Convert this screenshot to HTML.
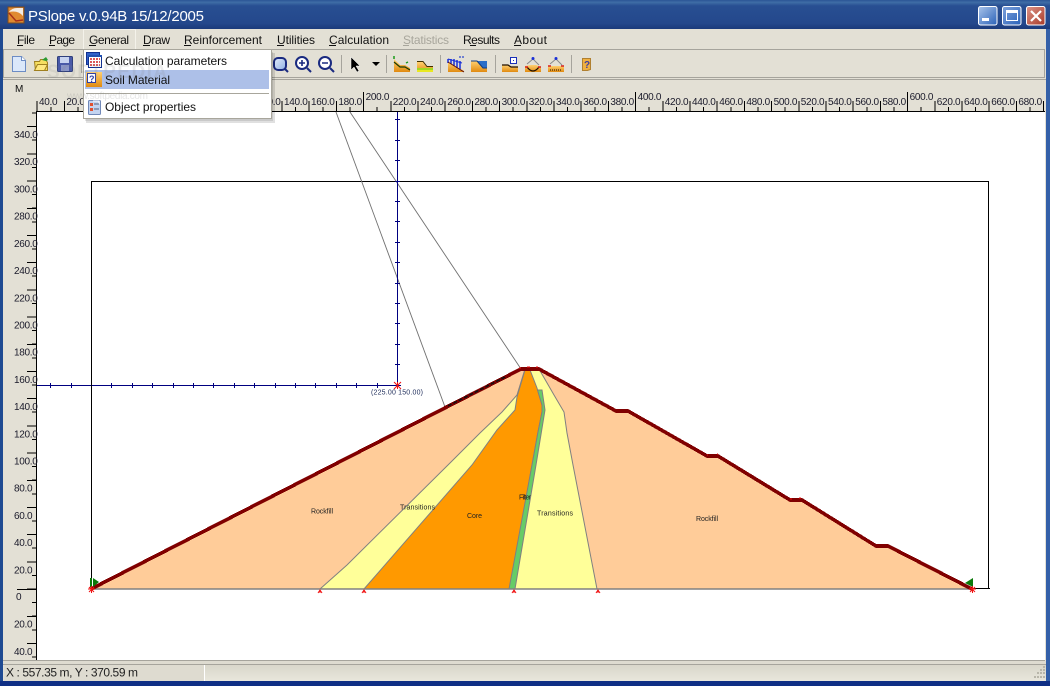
<!DOCTYPE html>
<html>
<head>
<meta charset="utf-8">
<style>
html,body{margin:0;padding:0;width:1050px;height:686px;overflow:hidden;background:#e3e0d5}
svg{display:block;font-family:"Liberation Sans",sans-serif}
.m{font-size:12px;fill:#111}
.r{font-size:10px;fill:#1a1a2a;letter-spacing:-.3px}
.d{font-size:7px;fill:#222}
</style>
</head>
<body>
<svg width="1050" height="686" viewBox="0 0 1050 686" xmlns="http://www.w3.org/2000/svg">
<defs>
<linearGradient id="tb" x1="0" y1="0" x2="0" y2="1">
<stop offset="0" stop-color="#2a5596"/><stop offset=".08" stop-color="#3f6da6"/><stop offset=".2" stop-color="#284f92"/><stop offset=".8" stop-color="#24488c"/><stop offset="1" stop-color="#1b3a7a"/>
</linearGradient>
<linearGradient id="bb" x1="0" y1="0" x2="1" y2="1"><stop offset="0" stop-color="#a9c4ea"/><stop offset="1" stop-color="#2a62b8"/></linearGradient>
<linearGradient id="mb" x1="0" y1="0" x2="1" y2="1"><stop offset="0" stop-color="#7ea2dc"/><stop offset="1" stop-color="#2a62b8"/></linearGradient>
<linearGradient id="cb" x1="0" y1="0" x2="1" y2="1"><stop offset="0" stop-color="#dc9488"/><stop offset="1" stop-color="#a83a28"/></linearGradient>
<linearGradient id="og" x1="0" y1="0" x2="0" y2="1"><stop offset="0" stop-color="#ffd070"/><stop offset="1" stop-color="#e08a10"/></linearGradient>
<linearGradient id="st" x1="0" y1="0" x2="0" y2="1"><stop offset="0" stop-color="#d9d6ca"/><stop offset="1" stop-color="#e8e6dc"/></linearGradient>
<linearGradient id="lens" x1="0" y1="0" x2="1" y2="1"><stop offset="0" stop-color="#e4ecfa"/><stop offset="1" stop-color="#8fb0e4"/></linearGradient>
</defs>

<!-- frame -->
<rect width="1050" height="686" fill="#e3e0d5"/>
<rect x="0" y="0" width="3" height="686" fill="#1f4a92"/>
<rect x="1046" y="0" width="4" height="686" fill="#3460a8"/>
<rect x="0" y="0" width="1050" height="29" fill="url(#tb)"/>
<rect x="0" y="681" width="1050" height="5" fill="#0f2f85"/>

<!-- title -->
<g>
<rect x="8" y="7" width="16" height="16" fill="#e08a30"/>
<path d="M9 12 Q12 8 17 8 L23 8 L23 16 Q18 10 9 12Z" fill="#f4ece4"/>
<path d="M9 13 L16 21 L23 20" fill="none" stroke="#a83018" stroke-width="1.5"/>
<path d="M8 7h16v16h-16z" fill="none" stroke="#7a4a20"/>
</g>
<text x="28" y="21" font-size="15px" fill="#fff" textLength="176" lengthAdjust="spacing">PSlope v.0.94B 15/12/2005</text>
<g>
<rect x="978.500" y="6.500" width="18.500" height="18.500" rx="2" fill="url(#bb)" stroke="#fff"/>
<rect x="982" y="18" width="7" height="3" fill="#fff"/>
<rect x="1002.500" y="6.500" width="18.500" height="18.500" rx="2" fill="url(#mb)" stroke="#fff"/>
<path d="M1006.500 10.500h11v10h-11z" fill="none" stroke="#fff"/>
<rect x="1006" y="10" width="12" height="3" fill="#fff"/>
<rect x="1026.500" y="6.500" width="18.500" height="18.500" rx="2" fill="url(#cb)" stroke="#fff"/>
<path d="M1031 11 L1041 21 M1041 11 L1031 21" stroke="#fff" stroke-width="2.2"/>
</g>

<!-- menubar -->
<g class="m">
<text class="m" x="17" y="44" textLength="18">File</text>
<text class="m" x="49" y="44" textLength="26">Page</text>
<text class="m" x="89" y="44" textLength="40">General</text>
<text class="m" x="143" y="44" textLength="27">Draw</text>
<text class="m" x="184" y="44" textLength="78">Reinforcement</text>
<text class="m" x="277" y="44" textLength="38">Utilities</text>
<text class="m" x="329" y="44" textLength="60">Calculation</text>
<text class="m" x="403" y="44" textLength="46" style="fill:#a8a69c">Statistics</text>
<text class="m" x="463" y="44" textLength="37">Results</text>
<text class="m" x="514" y="44" textLength="33">About</text>
</g>
<path d="M17 45.500h6M49 45.500h6M89 45.500h7M143 45.500h7M184 45.500h7M277 45.500h7M329 45.500h7M470 45.500h6M514 45.500h7" stroke="#111" fill="none"/>
<path d="M403 45.500h6" stroke="#a8a69c"/>

<!-- toolbar -->
<rect x="3.500" y="49.500" width="1041" height="28" fill="none" stroke="#a6a49c"/>
<rect x="3" y="79" width="1043" height="1" fill="#a6a49c"/>
<g fill="none" stroke="#a6a49c"><path d="M81.500 55v18M341.500 55v18M386.500 55v18M440.500 55v18M495.500 55v18M571.500 55v18"/></g>

<!-- tool icons -->
<path d="M12.500 56.500h9l4 4v11h-13z" fill="#dbe8fa" stroke="#6c8cc4"/>
<path d="M21.500 56.500v4h4" fill="#fff" stroke="#6c8cc4"/>
<path d="M34.500 61.500h5l1-2h5l2 3v8h-12z" fill="#f6de60" stroke="#a08020"/>
<path d="M34.500 70.500l3-6h10l-3 6z" fill="#ffe880" stroke="#a08020"/>
<path d="M42 60l4-3 2 3-2 1" fill="#2a9a30"/>
<rect x="57.500" y="56.500" width="15" height="15" rx="1" fill="#4a5aa8" stroke="#30407c"/>
<rect x="60" y="57" width="9" height="6" fill="#c8d4f0"/>
<rect x="61" y="65" width="8" height="6" fill="#8a96c8"/>

<g fill="none" stroke="#1a2a80" stroke-width="2">
<rect x="274" y="58" width="12" height="12" rx="4" fill="url(#lens)"/><path d="M285 69l3 3"/>
<circle cx="302" cy="63" r="6" fill="#fff"/><path d="M307 68l4 4"/>
<circle cx="325" cy="63" r="6" fill="#fff"/><path d="M330 68l4 4"/>
<path d="M299 63h6M302 60v6M322 63h6" stroke-width="1.6"/>
</g>
<path d="M351 57v13l3-3 3 5 2-1-3-5h4z" fill="#000" stroke="#fff" stroke-width=".5"/>
<path d="M372 62h8l-4 4z" fill="#000"/>

<!-- section icons -->
<g>
<path d="M394 59l6 6h5l5 3v4h-16z" fill="url(#og)"/><path d="M394 62l6 5h5l5 3" fill="none" stroke="#1a3a00" stroke-width="1.2"/>
<path d="M394 56v3M408 62l-2 1" stroke="#1a9a1a" stroke-width="1.500"/>
<path d="M417 62h6l4 5h6v5h-16z" fill="url(#og)"/><path d="M417 68h16v2h-16z" fill="#a0d820"/><path d="M417 70h16v2h-16z" fill="#e8e820"/><path d="M417 61.500h6l4 5h6" fill="none" stroke="#403000"/>
<path d="M448 62l16 9v1h-16z" fill="url(#og)"/><path d="M448 59v4M451 59v5M454 59v7M457 60v8M460 61v8" stroke="#1a30d8" stroke-width="1.500"/><path d="M448 59l14 4" stroke="#1a30d8"/><path d="M448 62l16 10" stroke="#601010"/>
<path d="M459 57h2M462 57h2" stroke="#7080d0" stroke-width="2"/>
<path d="M471 61h6l6 7h4v4h-16z" fill="url(#og)"/><path d="M477 61h10v7h-4z" fill="#2a6ec8"/><path d="M471 61h6l6 7h4" fill="none" stroke="#103a80"/>
<path d="M502 65h6l3 2h7v5h-16z" fill="url(#og)"/><path d="M502 65h6l3 2h7" fill="none" stroke="#201000" stroke-width="1.2"/>
<rect x="510.500" y="57.500" width="6" height="6" fill="#fff" stroke="#1a30b8"/><rect x="513" y="60" width="1" height="1" fill="#1a30b8"/>
<path d="M525 66l6-1 5 0 5 2v5h-16z" fill="url(#og)"/>
<path d="M527 67q6 8 12 0" fill="none" stroke="#201000" stroke-width="1.3"/><path d="M527 64l6-5 6 6" fill="none" stroke="#888"/>
<circle cx="533" cy="58.500" r="1.500" fill="#1a30d8"/><path d="M525 67h3M538 67h3" stroke="#d82020" stroke-width="1.500"/>
<path d="M548 66h16v6h-16z" fill="url(#og)"/>
<path d="M550 70h12" stroke="#201000" stroke-dasharray="1 1"/><path d="M550 64l6-5 6 6" fill="none" stroke="#888"/>
<circle cx="556" cy="58.500" r="1.500" fill="#1a30d8"/><path d="M548 66h3M561 66h3" stroke="#d82020" stroke-width="1.500"/>
<path d="M582.500 58.500h8v11l-3 1h-5z" fill="#f0b040" stroke="#b08030"/>
<text x="584" y="68" font-size="10px" font-weight="bold" fill="#4040a0">?</text>
</g>

<!-- ruler labels -->
<text x="15" y="92" font-size="10px" fill="#111">M</text>
<rect x="37" y="112" width="1008" height="549" fill="#fff"/>
<g shape-rendering="crispEdges" fill="none" stroke="#000">
<path d="M36 111.500H1045M36.500 111V660"/>
<path d="M36.700 106H1045" stroke-width="10" stroke-dasharray="1 26.2"/>
<path d="M36.700 109H1045" stroke-width="4" stroke-dasharray="1 12.6"/>
<path d="M363.500 92v19M635.500 92v19M907.500 92v19"/>
<path d="M31.500 644V112" stroke-width="9" stroke-dasharray="1 26.2"/>
<path d="M34 657.500V112" stroke-width="4" stroke-dasharray="1 12.6"/>
<path d="M17 589.500h19"/>
</g>
<g class="r">
<text class="r" x="39" y="105">40.0</text><text class="r" x="66.400" y="105">20.0</text>
<text class="r" x="257" y="105">120.0</text><text class="r" x="284" y="105">140.0</text><text class="r" x="311" y="105">160.0</text><text class="r" x="338.400" y="105">180.0</text>
<text class="r" x="365.600" y="100">200.0</text>
<text class="r" x="392.800" y="105">220.0</text><text class="r" x="420" y="105">240.0</text><text class="r" x="447.200" y="105">260.0</text><text class="r" x="474.400" y="105">280.0</text><text class="r" x="501.600" y="105">300.0</text><text class="r" x="528.800" y="105">320.0</text><text class="r" x="556" y="105">340.0</text><text class="r" x="583.200" y="105">360.0</text><text class="r" x="610.400" y="105">380.0</text>
<text class="r" x="637.600" y="100">400.0</text>
<text class="r" x="664.800" y="105">420.0</text><text class="r" x="692" y="105">440.0</text><text class="r" x="719.200" y="105">460.0</text><text class="r" x="746.400" y="105">480.0</text><text class="r" x="773.600" y="105">500.0</text><text class="r" x="800.800" y="105">520.0</text><text class="r" x="828" y="105">540.0</text><text class="r" x="855.200" y="105">560.0</text><text class="r" x="882.400" y="105">580.0</text>
<text class="r" x="909.600" y="100">600.0</text>
<text class="r" x="936.800" y="105">620.0</text><text class="r" x="964" y="105">640.0</text><text class="r" x="991.200" y="105">660.0</text><text class="r" x="1018.400" y="105">680.0</text>
</g>
<g class="r">
<text class="r" x="14" y="138">340.0</text><text class="r" x="14" y="165">320.0</text><text class="r" x="14" y="192.500">300.0</text><text class="r" x="14" y="219.700">280.0</text><text class="r" x="14" y="246.900">260.0</text><text class="r" x="14" y="274">240.0</text><text class="r" x="14" y="301.300">220.0</text><text class="r" x="14" y="328.500">200.0</text><text class="r" x="14" y="355.700">180.0</text><text class="r" x="14" y="382.900">160.0</text><text class="r" x="14" y="410">140.0</text><text class="r" x="14" y="437.300">120.0</text><text class="r" x="14" y="464.500">100.0</text><text class="r" x="14" y="491.700">80.0</text><text class="r" x="14" y="518.900">60.0</text><text class="r" x="14" y="546">40.0</text><text class="r" x="14" y="573.500">20.0</text><text class="r" x="16" y="600">0</text><text class="r" x="14" y="627.700">20.0</text><text class="r" x="14" y="654.900">40.0</text>
</g>

<!-- canvas drawing -->
<rect x="91.500" y="181.500" width="897" height="407" fill="none" stroke="#000" shape-rendering="crispEdges"/>
<g fill="none" stroke="#707070" stroke-width=".9">
<path d="M336 112L445 407"/>
<path d="M350 112L521 369"/>
</g>
<g fill="none" stroke="#000080" shape-rendering="crispEdges">
<path d="M37 385.500H401M397.500 112V389"/>
<path d="M50.500 383v5M71.500 383v5M111.500 383v5M132.500 383v5M152.500 383v5M173.500 383v5M193.500 383v5M213.500 383v5M234.500 383v5M254.500 383v5M275.500 383v5M295.500 383v5M315.500 383v5M336.500 383v5M356.500 383v5M377.500 383v5"/>
<path d="M395 364.500h5M395 344.500h5M395 323.500h5M395 303.500h5M395 283.500h5M395 262.500h5M395 242.500h5M395 221.500h5M395 201.500h5M395 181.500h5M395 160.500h5M395 140.500h5M395 119.500h5"/>
</g>
<path d="M91.500 181v408" stroke="#000" shape-rendering="crispEdges"/>
<text x="371" y="394.500" font-size="7px" fill="#23315e" textLength="52">(225.00 150.00)</text>

<!-- dam -->
<g stroke="#808080" stroke-width="1">
<path d="M91 589L521 369L539 369L616 411L628 411L707 456L718 456L790 500L802 500L876 546L888 546L972 589Z" fill="#ffcc99"/>
<path d="M320 589L347 565L450 463L480 433L502 412L517 395L525 369L539 369L554 395L564 412L567 433L573 465L597 589Z" fill="#ffff99"/>
<path d="M364 589L472 465L497 430L515 410L517 397L525 370L530 370L537 388L542 405L542 412L538 432L532 465L510 589Z" fill="#ff9900"/>
<path d="M537.500 390L542 390L545 410L536 465L515 589L509 589L532 465L538 432L542 412L542 405Z" fill="#66cc66"/>
</g>
<path d="M91 589H972" stroke="#808080" stroke-width="1.500"/>
<path d="M91 589L521 369L539 369L616 411L628 411L707 456L718 456L790 500L802 500L876 546L888 546L972 589" fill="none" stroke="#800000" stroke-width="3.600" shape-rendering="crispEdges"/>
<path d="M448 406L505 377" fill="none" stroke="#111" stroke-width="1.500" stroke-dasharray="4 2"/>
<path d="M990 588.500H972" stroke="#000"/>

<g class="d">
<text class="d" x="311" y="513.500" textLength="22">Rockfill</text>
<text class="d" x="400" y="509.500" textLength="35">Transitions</text>
<text class="d" x="467" y="518" textLength="15">Core</text>
<text class="d" x="519" y="499.500" textLength="12">Filter</text>
<text class="d" x="537" y="515.500" textLength="36">Transitions</text>
<text class="d" x="696" y="521" textLength="22">Rockfill</text>
</g>

<!-- green markers -->
<rect x="90" y="578" width="2" height="9" fill="#0a7a0a"/>
<path d="M93 578L99 582L93 587Z" fill="#0a7a0a"/>
<path d="M973 578V587L965 583Z" fill="#0a7a0a"/>

<!-- red markers -->
<g stroke="#f01010" fill="none" stroke-width="1">
<path d="M88 589h7M91.500 586v7M89 587l5 5M94 587l-5 5"/>
<path d="M318 593l2-3 2 3M320 590v3"/>
<path d="M362 593l2-3 2 3M364 590v3"/>
<path d="M512 593l2-3 2 3M514 590v3"/>
<path d="M596 593l2-3 2 3M598 590v3"/>
<path d="M969 589h7M972.500 586v7M970 587l5 5M975 587l-5 5"/>
<path d="M394 382l7 7M401 382l-7 7M397.500 382v7"/>
<path d="M519 368h2M527 367h3M536 367h2M707 455h1M717 454h1M790 499h2M799 498h2"/>
</g>

<!-- status -->
<rect x="3" y="660" width="1042" height="1" fill="#a6a49c"/>
<rect x="3" y="661" width="1043" height="3" fill="#dedbd0"/>
<rect x="3" y="664" width="1043" height="1" fill="#a6a49c"/>
<rect x="4" y="665" width="200" height="16" fill="#dedbd0"/>
<rect x="205" y="665" width="841" height="16" fill="url(#st)"/>
<rect x="204" y="665" width="1" height="16" fill="#fff"/>
<text x="6" y="676.500" font-size="12px" fill="#222" textLength="132">X : 557.35 m, Y : 370.59 m</text>
<path d="M1043 667h2M1040 670h2M1043 670h2M1037 673h2M1040 673h2M1043 673h2M1034 677h2M1037 677h2M1040 677h2M1043 677h2" stroke="#b8b6aa" stroke-width="2"/>

<!-- open menu -->
<path d="M83.500 29.500h52v20h-52z" fill="#e3e0d5" stroke="#f4f2ea"/>
<text class="m" x="89" y="44" textLength="40">General</text>
<path d="M89 45.500h7" stroke="#111"/>
<rect x="86" y="53" width="189" height="70" fill="#000" opacity=".12"/>
<rect x="85" y="52" width="188" height="69" fill="#000" opacity=".1"/>
<rect x="83.500" y="49.500" width="188" height="69" fill="#fff" stroke="#a8a69c"/>
<rect x="85" y="70" width="184" height="19" fill="#adc0e8"/>
<path d="M86 93.500h183" stroke="#a8a69c"/>
<text x="105" y="65" font-size="12px" fill="#111" textLength="122">Calculation parameters</text>
<text x="105" y="84" font-size="12px" fill="#111" textLength="65">Soil Material</text>
<text x="105" y="111" font-size="12px" fill="#111" textLength="91">Object properties</text>

<!-- menu icons -->
<rect x="86.500" y="52.500" width="13" height="12" fill="#3060c8" stroke="#103090"/>
<rect x="88.500" y="55.500" width="13" height="12" fill="#fff" stroke="#103090"/>
<path d="M88 55h14v2h-14z" fill="#2050b0"/>
<path d="M90 59h2M93 59h2M96 59h2M99 59h1M90 62h2M93 62h2M96 62h2M99 62h1M90 65h2M93 65h2M96 65h2M99 65h1" stroke="#d02020" stroke-width="1.500"/>
<rect x="86" y="72" width="16" height="15" fill="url(#og)"/>
<rect x="87.500" y="73.500" width="8" height="9" fill="#fff" stroke="#3040a0"/>
<text x="89" y="82" font-size="9px" font-weight="bold" fill="#3040a0">?</text>
<rect x="88.500" y="100.500" width="12" height="14" rx="1" fill="#c4d4f0" stroke="#7088b8"/>
<path d="M93 101h6v3" fill="none" stroke="#fff"/>
<rect x="90" y="103" width="3" height="3" fill="#e05030"/>
<rect x="90" y="108" width="3" height="3" fill="#e05030"/>
<path d="M94 104h5M94 109h5" stroke="#506080"/>

<!-- watermark overlay -->
<text x="47" y="78" font-size="19px" font-weight="bold" fill="#808080" opacity=".14" textLength="120">SOFTPEDIA</text>
<text x="67" y="99" font-size="10px" fill="#808080" opacity=".2" textLength="81">www.softpedia.com</text>
</svg>
</body>
</html>
